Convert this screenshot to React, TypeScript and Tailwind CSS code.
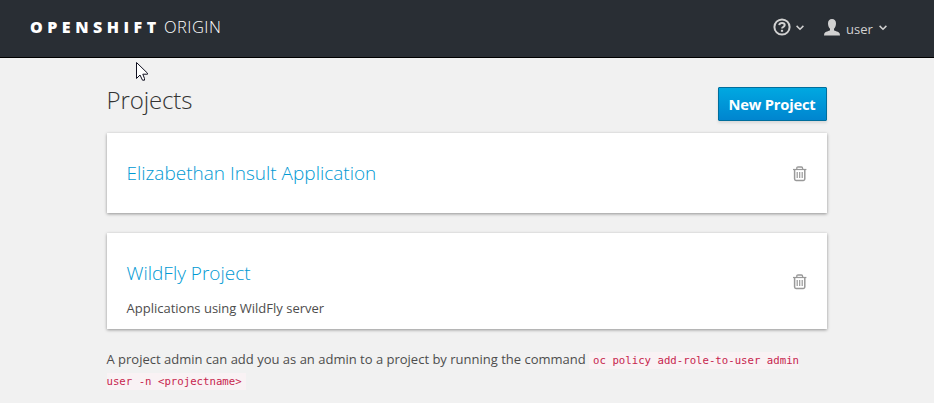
import React from 'react';

function Chevron({ className = '' }: { className?: string }) {
  return (
    <svg className={className} width="8" height="6" viewBox="0 0 8 6" fill="none" stroke="#d1d1d1" strokeWidth="1.5">
      <path d="M0.6 0.9 L4 4.2 L7.4 0.9" />
    </svg>
  );
}

function TrashIcon() {
  return (
    <svg className="mt-[2px]" width="14" height="16" viewBox="0 0 14 16" fill="none" stroke="#999">
      <path d="M0 3.5H13.4" strokeWidth="1.2" />
      <path d="M3.8 3.2V2.2Q3.8 1 5 1H8.4Q9.6 1 9.6 2.2V3.2" strokeWidth="1.3" />
      <path d="M1.6 3.5V13Q1.6 14.4 3 14.4H10.4Q11.8 14.4 11.8 13V3.5" strokeWidth="1.5" />
      <path d="M4.2 6V12M6.7 6V12M9.2 6V12" strokeWidth="1.2" />
    </svg>
  );
}

function Header() {
  return (
    <header className="flex h-[58px] items-start justify-between border-b border-black bg-[#292e34] pr-[46px] pl-[30px]">
      <div className="mt-[15px] flex items-baseline text-[16px] leading-6 text-white">
        <span className="w-[134px] text-[16px] font-extrabold tracking-[4.5px]">OPENSHIFT</span>
        <span className="text-[16.5px] font-light tracking-[0.45px]">ORIGIN</span>
      </div>
      <nav className="mt-[18px] flex items-start">
        <svg width="18" height="18" viewBox="0 0 18 18" fill="none" stroke="#d1d1d1">
          <circle cx="9" cy="9" r="7.6" strokeWidth="2" />
          <path d="M6.2 7.2Q6.5 4.9 9 4.9Q11.7 4.9 11.7 7Q11.7 8.1 10.4 8.8Q9.1 9.4 9.1 10.4" strokeWidth="2" />
          <path d="M9 11.8V13.8" strokeWidth="2.2" />
        </svg>
        <Chevron className="mt-[7px] ml-[5px]" />
        <svg className="mt-px ml-[20.5px]" width="16" height="17" viewBox="0 0 16 17" fill="#d1d1d1">
          <path d="M8 0C5.5 0 4 1.7 4 4.3C4 6.6 4.8 8.7 6 9.8V11.2C5.8 12 0.8 12.4 0.3 14.6L0 16.5H16L15.7 14.6C15.2 12.4 10.2 12 10 11.2V9.8C11.2 8.7 12 6.6 12 4.3C12 1.7 10.5 0 8 0Z" />
        </svg>
        <span className="mt-[2px] ml-[6px] w-[27px] text-[13px] leading-[18px] text-[#d1d1d1]">user</span>
        <Chevron className="mt-[7px] mr-[1px] ml-[6px]" />
      </nav>
    </header>
  );
}

function ProjectCard({ title, description }: { title: string; description?: string }) {
  return (
    <section
      className={`mb-5 flex items-center justify-between bg-white pr-5 pl-[19.5px] shadow-[0_1px_3px_rgba(0,0,0,0.4)] ${description ? 'h-24' : 'h-20'}`}
    >
      <div className={description ? 'pt-[18px]' : ''}>
        <h2 className="text-[19px] leading-6 font-light text-[#0099d3]">{title}</h2>
        {description && <p className="mt-[12px] text-[13px] leading-[22px] text-[#4d4d4d]">{description}</p>}
      </div>
      <TrashIcon />
    </section>
  );
}

export default function App() {
  return (
    <div className="relative h-[403px] w-[934px] overflow-hidden bg-[#f1f1f1] font-['Open_Sans',sans-serif]">
      <Header />
      <main className="mx-auto w-[720px] pt-[29px]">
        <div className="mb-3 flex h-[34px] items-start justify-between">
          <h1 className="-mt-[3px] -ml-[0.5px] text-[24px] leading-[32px] font-light tracking-[-0.1px] text-[#333]">Projects</h1>
          <button className="h-[34px] w-[109px] rounded-[1px] border border-[#006e9c] bg-linear-to-b from-[#00a8e1] to-[#0085cf] pr-px pb-px text-[14.7px] leading-5 font-bold tracking-[-0.2px] whitespace-nowrap text-white shadow-[0_2px_3px_rgba(0,0,0,0.1)]">
            New Project
          </button>
        </div>
        <ProjectCard title="Elizabethan Insult Application" />
        <ProjectCard title="WildFly Project" description="Applications using WildFly server" />
        <p className="-ml-[0.5px] text-[13px] leading-[21px] whitespace-nowrap text-[#4d4d4d]">
          A project admin can add you as an admin to a project by running the command{' '}
          <code className="bg-[#f9f2f4] py-[2px] pr-1 pl-1 font-['DejaVu_Sans_Mono',monospace] text-[10.7px] leading-none text-[#c7254e]">
            oc policy add-role-to-user admin
            <br />
            user -n &lt;projectname&gt;
          </code>
        </p>
      </main>
      <svg className="absolute top-[61px] left-[135px]" width="14" height="22" viewBox="0 0 14 22" fill="white" stroke="#101020">
        <path d="M1.5 1.5V17.5L5 14L7.5 19.2H9.5V17.5L7.8 13.2H12.5V12.2Z" />
      </svg>
    </div>
  );
}
